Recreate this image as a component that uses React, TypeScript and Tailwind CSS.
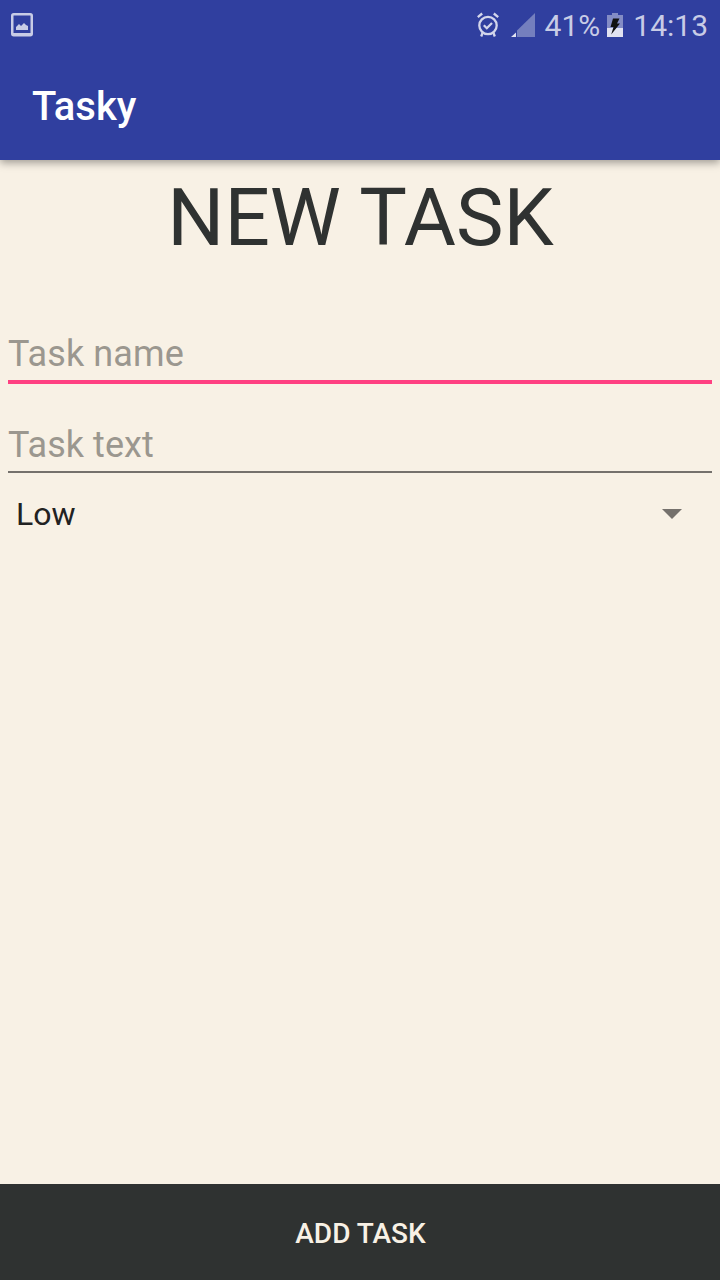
export default function App() {
  return (
    <div className="flex h-[1280px] w-[720px] flex-col bg-[#f8f1e5] font-['Roboto',sans-serif]">
      <header className="h-[160px] bg-[#303f9f] shadow-[0_3px_8px_rgba(0,0,0,0.35)]">
        <div className="flex h-[50px] items-center justify-between pr-[12px] pl-[11px]">
          <svg width="22" height="24" viewBox="0 0 22 24">
            <rect x="1.25" y="1.25" width="19.5" height="21" rx="1.5" fill="none" stroke="#c8cce6" strokeWidth="2.5" />
            <path d="M2 20h18v2H2z" fill="#c8cce6" />
            <path d="M5 17v-3l3-3 2 2 3-3 2 2 2 1v4z" fill="#c8cce6" />
          </svg>
          <div className="flex items-center text-[30px] text-[#c8cce6]">
            <svg width="24" height="26" viewBox="0 0 24 26" fill="none" stroke="#d3d6eb">
              <circle cx="12" cy="13.5" r="8.7" strokeWidth="2.3" />
              <path d="m7.8 13.2 3 3 5.2-5.2" strokeWidth="2.3" />
              <path d="m1.8 5.2 4.4-3.700M22.2 5.200l-4.4-3.700M6.5 21l-1.300 3.500M17.5 21l1.300 3.500" strokeWidth="2.3" />
            </svg>
            <svg className="ml-[11px]" width="24" height="24" viewBox="0 0 24 24">
              <path d="M0 24l5-4.5V24z" fill="#e0e2f1" />
              <path d="M6 24v-6.5L24 0v24z" fill="#747fbe" />
            </svg>
            <span className="ml-[10px] pt-[2px] leading-[50px]">41%</span>
            <svg className="ml-[7px]" width="16" height="24" viewBox="0 0 16 24">
              <path d="M5 0h6v2h5v13H0V2h5z" fill="#838cc5" />
              <path d="M0 15h16v9H0z" fill="#e0e2f1" />
              <path d="M6 5.5h6.5L10 10.500h3L4.200 21.500 6.500 14H3.500z" fill="#111" />
            </svg>
            <span className="ml-[10px] pt-[2px] leading-[50px]">14:13</span>
          </div>
        </div>
        <div className="flex h-[110px] items-center pt-1 pl-8 text-[40px] font-medium text-white">Tasky</div>
      </header>
      <main className="flex flex-1 flex-col">
        <h1 className="h-[113px] pl-px text-center text-[80px] leading-[117px] text-[#2f3231]">NEW TASK</h1>
        <div className="mx-2 mt-[50px] h-[61px] border-b-4 border-[#ff4081] text-[36px] leading-[63px] tracking-[0.1px] text-[#9b978f]">Task name</div>
        <div className="mx-2 mt-[31px] h-[58px] border-b-2 border-[#75716c] text-[36px] leading-[60px] tracking-[0.05px] text-[#9b978f]">Task text</div>
        <div className="flex h-[82px] items-center justify-between pr-[38px] pl-4 text-[32px] text-[#222]">
          Low
          <svg width="20" height="10"><path d="M0 0h20L10 10z" fill="#75716c" /></svg>
        </div>
      </main>
      <button className="h-24 bg-[#2f3231] pt-1 pl-px text-[28px] font-medium text-[#f8f1e5]">ADD TASK</button>
    </div>
  );
}
